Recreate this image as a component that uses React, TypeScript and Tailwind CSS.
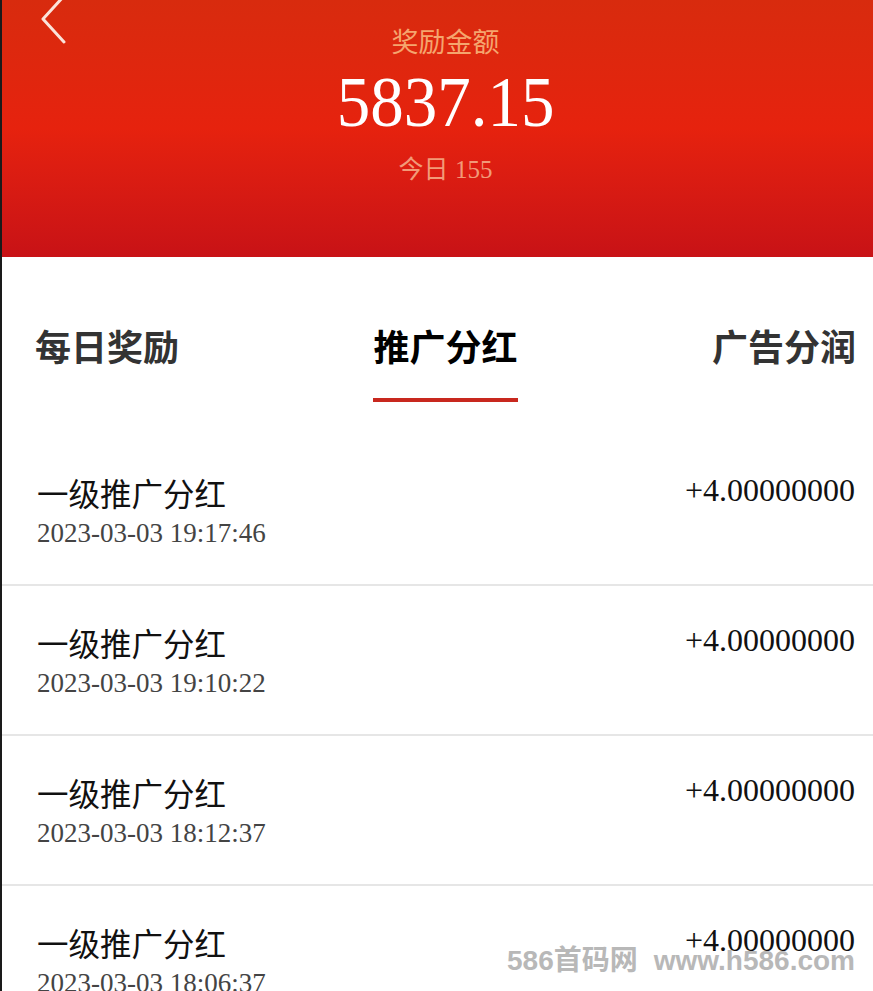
const rows = [
  { title: '一级推广分红', time: '2023-03-03 19:17:46', amount: '+4.00000000' },
  { title: '一级推广分红', time: '2023-03-03 19:10:22', amount: '+4.00000000' },
  { title: '一级推广分红', time: '2023-03-03 18:12:37', amount: '+4.00000000' },
  { title: '一级推广分红', time: '2023-03-03 18:06:37', amount: '+4.00000000' },
]

const cjk = "font-['Noto_Sans_CJK_SC',sans-serif]"
const serif = "font-['Liberation_Serif','Noto_Sans_CJK_SC',serif]"

export default function App() {
  return (
    <div className="relative h-[991px] w-[873px] overflow-hidden border-l-2 border-[#1a1a1a] bg-white">
      {/* header */}
      <div className="relative flex h-[257px] flex-col items-center bg-linear-to-b from-[#d82b0e] via-[#e6220e] to-[#c81216] pl-[16px]">
        <svg className="absolute left-[36px] top-[-6px]" width="30" height="52" viewBox="0 0 30 52" fill="none">
          <path d="M26 2 L5 25 L26 48" stroke="#fbe3da" strokeWidth="3" strokeLinecap="round" strokeLinejoin="round" />
        </svg>
        <div className={`${cjk} pt-[27px] text-[27px] leading-none text-[#f5a56e]`}>奖励金额</div>
        <div className={`${serif} mt-[14px] origin-center scale-y-[1.08] text-[67px] leading-none text-white`}>5837.15</div>
        <div className={`${serif} mt-[20px] text-[25px] leading-none text-[#f29a78]`}>
          <span className={cjk}>今日</span> 155
        </div>
      </div>

      {/* tabs */}
      <div className={`${cjk} flex items-start justify-between pl-[33px] pr-[17px] pt-[70px] text-[36px] font-bold leading-none`}>
        <div className="text-[#333]">每日奖励</div>
        <div className="flex flex-col items-stretch">
          <div className="text-black">推广分红</div>
          <div className="mt-[35px] h-[4px] bg-[#c8281e]" />
        </div>
        <div className="text-[#333]">广告分润</div>
      </div>

      {/* list */}
      <div className="mt-[34px]">
        {rows.map((r, i) => (
          <div key={i} className="flex h-[150px] justify-between border-b-2 border-[#e6e6e6] pl-[35px] pr-[18px]">
            <div className="pt-[41px]">
              <div className={`${cjk} text-[31.5px] leading-none text-[#111]`}>{r.title}</div>
              <div className={`${serif} mt-[11px] text-[27px] leading-none text-[#444]`}>{r.time}</div>
            </div>
            <div className={`${serif} pt-[38px] text-[32px] leading-none text-[#111]`}>{r.amount}</div>
          </div>
        ))}
      </div>

      {/* watermark */}
      <div className="absolute bottom-[16px] right-[18px] flex items-center gap-[16px] text-[28px] font-bold leading-none text-[#b8b8b8]">
        <span className="font-['Liberation_Sans','Noto_Sans_CJK_SC',sans-serif]">586首码网</span>
        <span className="font-['Liberation_Sans',sans-serif]">www.h586.com</span>
      </div>
    </div>
  )
}
